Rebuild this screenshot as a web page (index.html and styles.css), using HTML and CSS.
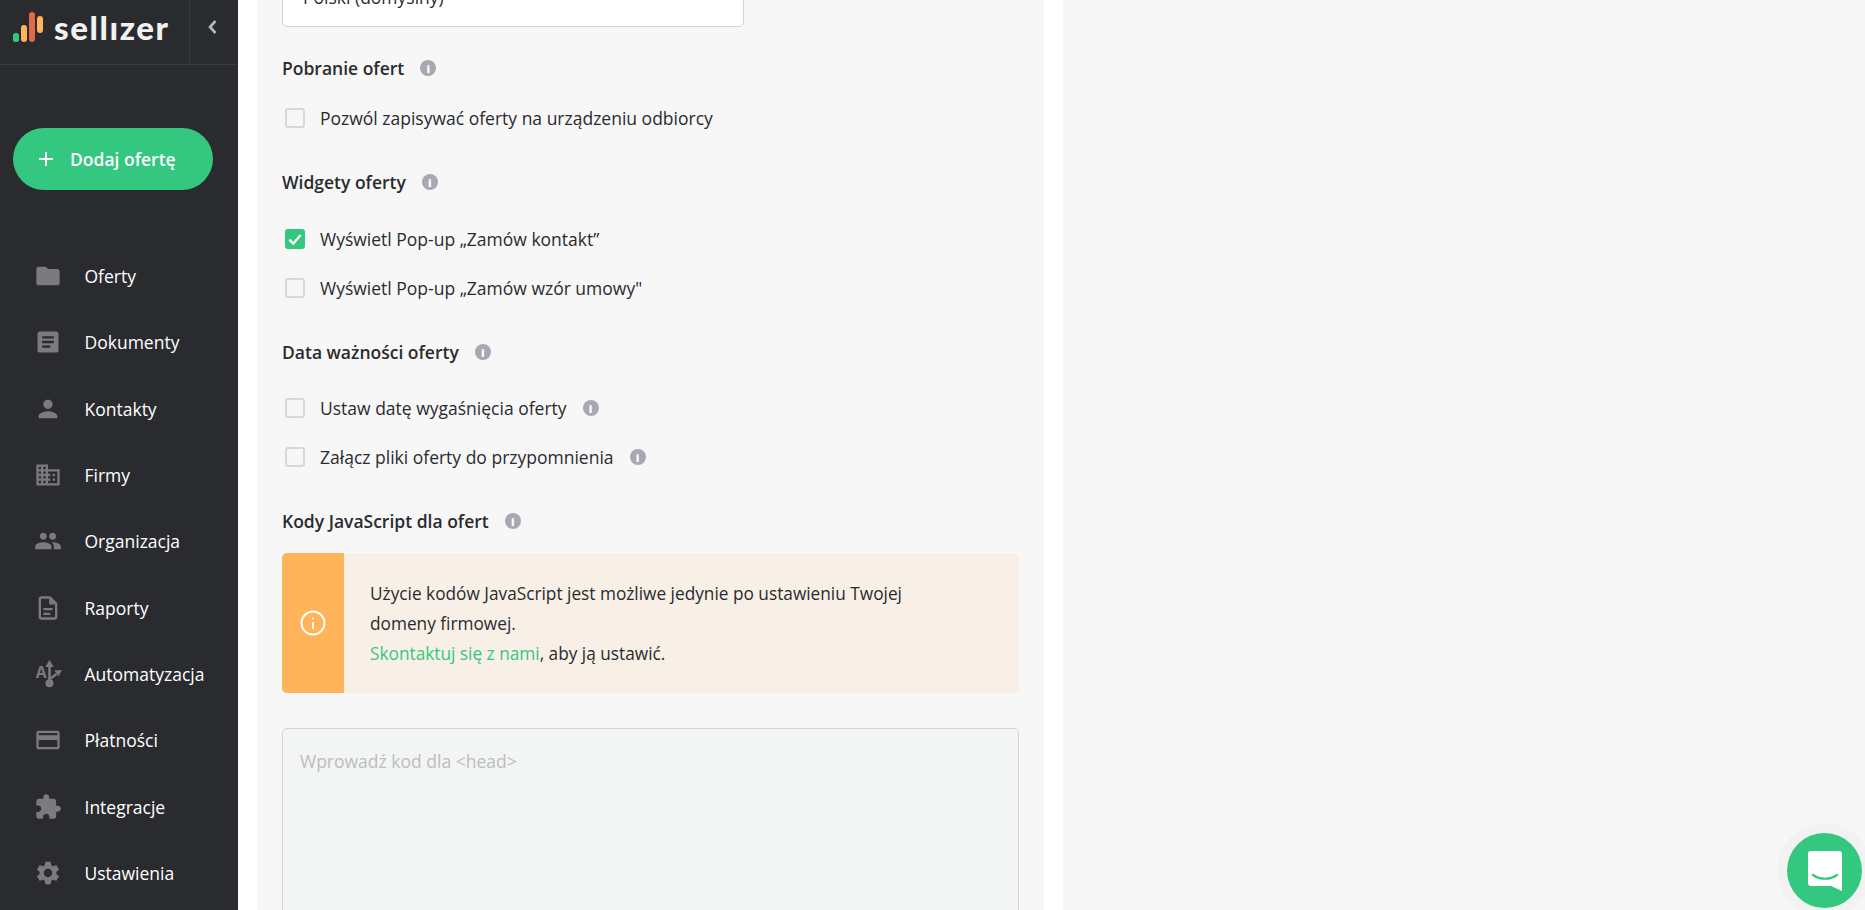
FILE: index.html
```html
<!DOCTYPE html>
<html lang="pl">
<head>
    <meta charset="UTF-8">
    <meta name="viewport" content="width=device-width, initial-scale=1.0">
    <title>Sellizer - ustawienia oferty</title>
    <link rel="stylesheet" href="styles.css">
</head>
<body>
    <aside class="sidebar">
        <div class="sidebar-top">
            <div class="logo">
                <svg class="logo-bars" width="32" height="32" viewBox="0 0 32 32">
                    <rect x="0" y="21" width="6" height="9" rx="2.500" fill="#34c77f"/>
                    <rect x="8" y="13" width="6" height="17" rx="3" fill="#ffb45a"/>
                    <rect x="16" y="0" width="6" height="30" rx="3" fill="#e0694a"/>
                    <rect x="24" y="4" width="6" height="17" rx="3" fill="#ffb45a"/>
                </svg>
                <span class="logo-text">sellızer</span>
            </div>
            <div class="collapse">
                <svg width="14" height="18" viewBox="0 0 14 18"><path d="M10.500 3 5 9l5.500 6" fill="none" stroke="#b4b6c4" stroke-width="2.600"/></svg>
            </div>
        </div>

        <a class="add-btn" href="#">
            <svg width="18" height="18" viewBox="0 0 18 18"><path d="M9 2v14M2 9h14" stroke="#fff" stroke-width="2"/></svg>
            <span>Dodaj ofertę</span>
        </a>

        <nav class="nav">
            <a class="nav-item" href="#">
                <svg class="nav-icon" viewBox="0 0 24 24"><path d="M10 4H4c-1.100 0-1.990.9-1.990 2L2 18c0 1.100.9 2 2 2h16c1.100 0 2-.9 2-2V8c0-1.100-.9-2-2-2h-8l-2-2z"/></svg>
                Oferty
            </a>
            <a class="nav-item" href="#">
                <svg class="nav-icon" viewBox="0 0 24 24"><path d="M19 3H5c-1.100 0-2 .9-2 2v14c0 1.100.9 2 2 2h14c1.100 0 2-.9 2-2V5c0-1.100-.9-2-2-2zm-5 14H7v-2h7v2zm3-4H7v-2h10v2zm0-4H7V7h10v2z"/></svg>
                Dokumenty
            </a>
            <a class="nav-item" href="#">
                <svg class="nav-icon" viewBox="0 0 24 24"><path d="M12 12c2.210 0 4-1.790 4-4s-1.790-4-4-4-4 1.790-4 4 1.790 4 4 4zm0 2c-2.670 0-8 1.340-8 4v2h16v-2c0-2.660-5.330-4-8-4z"/></svg>
                Kontakty
            </a>
            <a class="nav-item" href="#">
                <svg class="nav-icon" viewBox="0 0 24 24"><path d="M12 7V3H2v18h20V7H12zM6 19H4v-2h2v2zm0-4H4v-2h2v2zm0-4H4V9h2v2zm0-4H4V5h2v2zm4 12H8v-2h2v2zm0-4H8v-2h2v2zm0-4H8V9h2v2zm0-4H8V5h2v2zm10 12h-8v-2h2v-2h-2v-2h2v-2h-2V9h8v10zm-2-8h-2v2h2v-2zm0 4h-2v2h2v-2z"/></svg>
                Firmy
            </a>
            <a class="nav-item" href="#">
                <svg class="nav-icon" viewBox="0 0 24 24"><path d="M16 11c1.660 0 2.990-1.340 2.990-3S17.660 5 16 5c-1.660 0-3 1.340-3 3s1.340 3 3 3zm-8 0c1.660 0 2.990-1.340 2.990-3S9.660 5 8 5C6.340 5 5 6.340 5 8s1.340 3 3 3zm0 2c-2.330 0-7 1.170-7 3.500V19h14v-2.500c0-2.330-4.670-3.500-7-3.500zm8 0c-.29 0-.62.02-.97.05 1.160.84 1.970 1.970 1.970 3.450V19h6v-2.500c0-2.330-4.670-3.500-7-3.500z"/></svg>
                Organizacja
            </a>
            <a class="nav-item" href="#">
                <svg class="nav-icon" viewBox="0 0 24 24"><path d="M8 16h6v2H8zm0-4h8v2H8zm6-10H6c-1.100 0-2 .9-2 2v16c0 1.100.89 2 1.990 2H18c1.100 0 2-.9 2-2V8l-6-6zm4 18H6V4h7v5h5v11z"/></svg>
                Raporty
            </a>
            <a class="nav-item" href="#">
                <svg class="nav-icon" viewBox="0 0 24 24">
                    <text class="nav-icon-letter" x="1.500" y="15.500">A</text>
                    <circle cx="13.300" cy="20" r="3.400"/>
                    <path class="nav-icon-line" d="M13.300 20V5M13.300 16.500l6-4.500"/>
                    <path d="M13.300 0l3.600 6H9.700zM24 8.500l-6.500.5 3.500 5z"/>
                </svg>
                Automatyzacja
            </a>
            <a class="nav-item" href="#">
                <svg class="nav-icon" viewBox="0 0 24 24"><path d="M20 4H4c-1.110 0-1.990.89-1.990 2L2 18c0 1.110.89 2 2 2h16c1.110 0 2-.89 2-2V6c0-1.110-.89-2-2-2zm0 14H4v-6h16v6zm0-10H4V6h16v2z"/></svg>
                Płatności
            </a>
            <a class="nav-item" href="#">
                <svg class="nav-icon" viewBox="0 0 24 24"><path d="M20.500 11H19V7c0-1.100-.9-2-2-2h-4V3.500C13 2.120 11.880 1 10.500 1S8 2.120 8 3.500V5H4c-1.100 0-1.990.9-1.990 2v3.800H3.500c1.490 0 2.700 1.210 2.700 2.700s-1.210 2.700-2.700 2.700H2V20c0 1.100.9 2 2 2h3.800v-1.500c0-1.490 1.210-2.700 2.700-2.700 1.490 0 2.700 1.210 2.700 2.700V22H17c1.100 0 2-.9 2-2v-4h1.500c1.380 0 2.500-1.120 2.500-2.500S21.880 11 20.500 11z"/></svg>
                Integracje
            </a>
            <a class="nav-item" href="#">
                <svg class="nav-icon" viewBox="0 0 24 24"><path d="M19.140 12.940c.04-.3.06-.61.06-.94 0-.32-.02-.64-.07-.94l2.030-1.580c.18-.14.23-.41.12-.61l-1.920-3.320c-.12-.22-.37-.29-.59-.22l-2.390.96c-.5-.38-1.030-.7-1.620-.94l-.36-2.540c-.04-.24-.24-.41-.48-.41h-3.840c-.24 0-.43.17-.47.41l-.36 2.540c-.59.24-1.130.57-1.620.94l-2.390-.96c-.22-.08-.47 0-.59.22L2.740 8.870c-.12.21-.08.47.12.61l2.030 1.580c-.05.3-.09.63-.09.94s.02.64.07.94l-2.030 1.580c-.18.14-.23.41-.12.61l1.920 3.320c.12.22.37.29.59.22l2.390-.96c.5.38 1.030.7 1.620.94l.36 2.540c.05.24.24.41.48.41h3.840c.24 0 .44-.17.47-.41l.36-2.540c.59-.24 1.130-.56 1.620-.94l2.390.96c.22.08.47 0 .59-.22l1.920-3.320c.12-.22.07-.47-.12-.61l-2.010-1.580zM12 15.600c-1.980 0-3.600-1.620-3.600-3.600s1.620-3.600 3.600-3.600 3.600 1.620 3.600 3.600-1.620 3.600-3.600 3.600z"/></svg>
                Ustawienia
            </a>
        </nav>
    </aside>

    <main class="main">
        <section class="panel">
            <div class="select-box">Polski (domyślny)</div>

            <h3 class="heading heading-first">Pobranie ofert <span class="info">i</span></h3>
            <label class="check check-first"><span class="box"></span>Pozwól zapisywać oferty na urządzeniu odbiorcy</label>

            <h3 class="heading">Widgety oferty <span class="info">i</span></h3>
            <label class="check check-widgets">
                <span class="box box-on">
                    <svg width="16" height="16" viewBox="0 0 14 14"><path d="M2 7.500 5.500 11 12 3.500" fill="none" stroke="#fff" stroke-width="2"/></svg>
                </span>
                Wyświetl Pop-up „Zamów kontakt”
            </label>
            <label class="check"><span class="box"></span>Wyświetl Pop-up „Zamów wzór umowy"</label>

            <h3 class="heading">Data ważności oferty <span class="info">i</span></h3>
            <label class="check"><span class="box"></span>Ustaw datę wygaśnięcia oferty <span class="info">i</span></label>
            <label class="check"><span class="box"></span>Załącz pliki oferty do przypomnienia <span class="info">i</span></label>

            <h3 class="heading">Kody JavaScript dla ofert <span class="info">i</span></h3>
            <div class="alert">
                <div class="alert-side">
                    <svg width="26" height="26" viewBox="0 0 26 26">
                        <circle cx="13" cy="13" r="11.500" fill="none" stroke="#fff" stroke-width="2"/>
                        <path d="M13 12v7M13 7.500v2" stroke="#fff" stroke-width="2"/>
                    </svg>
                </div>
                <p class="alert-text">
                    Użycie kodów JavaScript jest możliwe jedynie po ustawieniu Twojej<br>
                    domeny firmowej.<br>
                    <a href="#">Skontaktuj się z nami</a>, aby ją ustawić.
                </p>
            </div>

            <textarea class="code" placeholder="Wprowadź kod dla <head>"></textarea>
        </section>
        <section class="preview"></section>
    </main>

    <div class="chat">
        <svg width="36" height="42" viewBox="0 0 36 42">
            <path d="M4 1h28a3 3 0 0 1 3 3v37l-11-5H4a3 3 0 0 1-3-3V4a3 3 0 0 1 3-3z" fill="#fff"/>
            <path d="M6 25c7 5 17 5 24 0" fill="none" stroke="#34c77f" stroke-width="2.200" stroke-linecap="round"/>
        </svg>
    </div>
</body>
</html>
```

FILE: styles.css
```css
* {
    box-sizing: border-box;
}
html, body {
    height: 100%;
}
body {
    margin: 0;
    display: flex;
    overflow: hidden;
    background-color: #fff;
    color: #2a2b2f;
    font-family: "Open Sans", sans-serif;
    font-size: 17.500px;
}
a {
    text-decoration: none;
}

/* sidebar */
.sidebar {
    flex: 0 0 238px;
    height: 910px;
    background-color: #2a2b2f;
    color: #fff;
}
.sidebar-top {
    display: flex;
    height: 65px;
    border-bottom: 1px solid #3a3b3f;
}
.logo {
    flex: 1;
    display: flex;
    align-items: center;
    padding: 0 0 10px 13px;
    border-right: 1px solid #3a3b3f;
}
.logo-bars {
    margin-right: 9px;
    margin-top: 2px;
}
.logo-text {
    font-family: "Lato", sans-serif;
    font-weight: 900;
    font-size: 33px;
    letter-spacing: 1.600px;
    color: #f2f2f2;
    line-height: 1;
}
.collapse {
    flex: 0 0 48px;
    display: flex;
    align-items: center;
    justify-content: center;
    padding: 0 4px 10px 0;
}
.add-btn {
    display: flex;
    align-items: center;
    width: 200px;
    height: 62px;
    margin: 63px 0 0 13px;
    padding-left: 24px;
    border-radius: 31px;
    background-color: #34c77f;
    color: #fff;
    font-weight: 600;
}
.add-btn span {
    margin-left: 15px;
}
.nav {
    margin-top: 53px;
}
.nav-item {
    display: flex;
    align-items: center;
    height: 66.300px;
    padding-left: 34px;
    color: #fff;
}
.nav-icon {
    width: 28px;
    height: 28px;
    margin-right: 22.500px;
    fill: #7b7b7d;
}
.nav-icon-letter {
    font-family: "Open Sans", sans-serif;
    font-size: 13.500px;
    font-weight: 700;
}
.nav-icon-line {
    fill: none;
    stroke: #7b7b7d;
    stroke-width: 2.200;
}

/* main */
.main {
    flex: 1;
    display: flex;
    gap: 19px;
    padding-left: 19px;
    min-width: 0;
}
.panel {
    flex: 0 0 787px;
    height: 910px;
    overflow: hidden;
    padding: 0 25px;
    background-color: #f7f7f7;
}
.preview {
    flex: 1;
    background-color: #f7f7f7;
}
.select-box {
    height: 47px;
    width: 462px;
    margin-top: -20px;
    padding: 3px 20px;
    background-color: #fff;
    border: 1px solid #d0d3dc;
    border-radius: 5px;
    line-height: 26px;
}
.heading {
    display: flex;
    align-items: center;
    height: 24px;
    margin: 40px 0 0;
    font-size: 17.500px;
    font-weight: 600;
}
.heading-first {
    margin-top: 29px;
}
.heading .info {
    margin-left: 16px;
}
.check {
    display: flex;
    align-items: center;
    height: 24px;
    margin-top: 25px;
    padding-left: 3px;
}
.heading + .check {
    margin-top: 32px;
}
.heading + .check-first {
    margin-top: 26px;
}
.heading + .check-widgets {
    margin-top: 33px;
}
.check .info {
    margin-left: 16px;
}
.box {
    flex: none;
    display: flex;
    align-items: center;
    justify-content: center;
    width: 20px;
    height: 20px;
    margin-right: 15px;
    background-color: #f7f7f7;
    border: 2px solid #d6d7df;
    border-radius: 3px;
}
.box-on {
    background-color: #34c77f;
    border-color: #34c77f;
}
.info {
    flex: none;
    display: inline-flex;
    align-items: center;
    justify-content: center;
    width: 16px;
    height: 16px;
    border-radius: 50%;
    background-color: #a7a8b1;
    color: #fff;
    font-size: 11px;
    font-weight: 800;
    line-height: 1;
}

/* alert */
.alert {
    display: flex;
    height: 140px;
    margin-top: 20px;
    background-color: #f8f0e7;
    border-radius: 5px;
    overflow: hidden;
}
.alert-side {
    flex: 0 0 62px;
    display: flex;
    align-items: center;
    justify-content: center;
    background-color: #ffb45a;
}
.alert-text {
    margin: 0;
    padding: 26px 0 0 26px;
    font-size: 17.250px;
    line-height: 30px;
}
.alert-text a {
    color: #34c77f;
}

.code {
    display: block;
    width: 100%;
    height: 260px;
    margin-top: 35px;
    padding: 20px 17px;
    resize: none;
    background-color: #f3f4f4;
    border: 1px solid #d0d3dc;
    border-radius: 5px;
    font-family: "Open Sans", sans-serif;
    font-size: 17.500px;
    line-height: 24px;
}
.code::placeholder {
    color: #bcbdbf;
    opacity: 1;
}

/* chat button */
.chat {
    position: fixed;
    left: 1787px;
    top: 833px;
    width: 75px;
    height: 75px;
    display: flex;
    align-items: center;
    justify-content: center;
    border-radius: 50%;
    background-color: #34c77f;
    box-shadow: 0 0 0 10px rgba(0, 0, 0, 0.02);
}
```
